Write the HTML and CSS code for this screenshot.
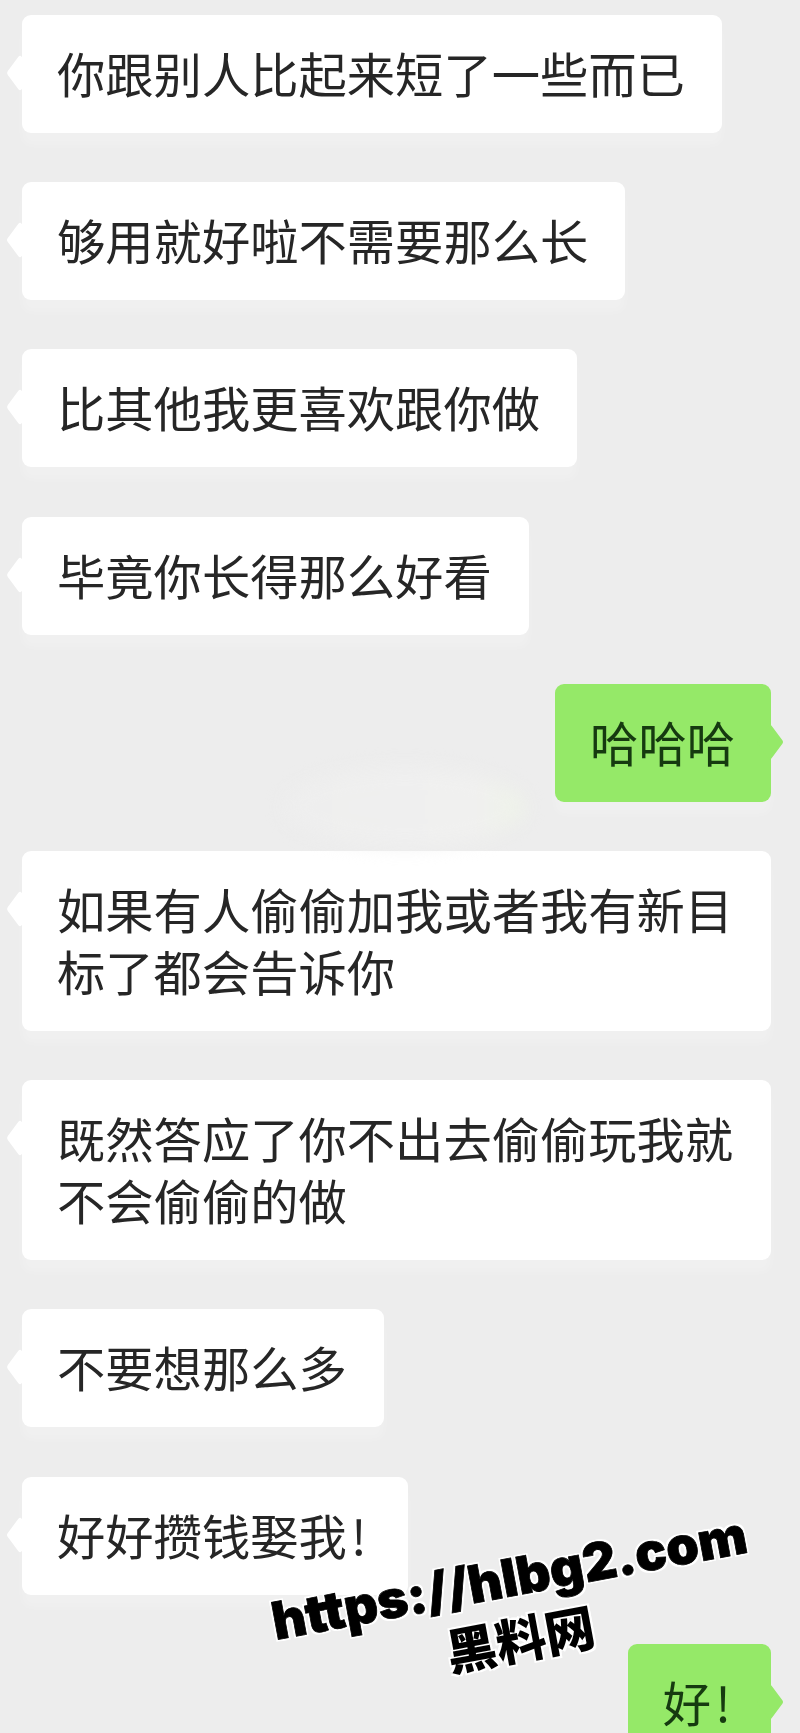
FILE: index.html
```html
<!DOCTYPE html>
<html lang="zh-CN">
<head>
    <meta charset="UTF-8">
    <meta name="viewport" content="width=device-width, initial-scale=1.0">
    <title>聊天记录</title>
    <link rel="stylesheet" href="styles.css">
</head>
<body>
    <div class="chat">
        <div class="msg">你跟别人比起来短了一些而已</div>
        <div class="msg">够用就好啦不需要那么长</div>
        <div class="msg">比其他我更喜欢跟你做</div>
        <div class="msg">毕竟你长得那么好看</div>
        <div class="msg me">哈哈哈</div>
        <div class="msg">如果有人偷偷加我或者我有新目标了都会告诉你</div>
        <div class="msg">既然答应了你不出去偷偷玩我就不会偷偷的做</div>
        <div class="msg">不要想那么多</div>
        <div class="msg">好好攒钱娶我<span class="bang">!</span></div>
        <div class="msg me">好<span class="bang">!</span></div>
    </div>

    <!-- smudge left over in the middle of the photo -->
    <div class="smudge"></div>

    <div class="watermark">
        <div class="wm-url">https://hlbg2.com</div>
        <div class="wm-name">黑料网</div>
    </div>
</body>
</html>
```

FILE: styles.css
```css
html, body {
    margin: 0;
    height: 1733px;
    overflow: hidden;
}
body {
    position: relative;
    background: #ededed;
    font-family: "Noto Sans CJK SC", "Noto Sans", sans-serif;
    color: #262626;
}
.chat {
    display: flex;
    flex-direction: column;
    align-items: flex-start;
    gap: 49.2px;
    padding: 15px 29px 0 22px;
    filter: blur(0.5px);
}
.msg {
    position: relative;
    box-sizing: border-box;
    max-width: 749px;
    padding: 26px 37px 30px 35px;
    background: #fff;
    border-radius: 9px;
    font-size: 48.3px;
    line-height: 62px;
    box-shadow: 0 12px 8px rgba(255, 255, 255, 0.2);
}
.msg::before {
    content: "";
    position: absolute;
    left: -15px;
    top: 45px;
    width: 26px;
    height: 26px;
    background: inherit;
    transform: scaleX(0.75) rotate(45deg);
    border-radius: 3px;
}
.me {
    align-self: flex-end;
    padding-left: 35px;
    padding-right: 36px;
    background: #95e968;
    color: #163a10;
}
.me::before {
    left: auto;
    right: -12px;
}
.bang {
    display: inline-block;
    width: 24px;
    text-align: center;
}
.smudge {
    position: absolute;
    left: 285px;
    top: 768px;
    width: 240px;
    height: 78px;
    border-radius: 50%;
    background: linear-gradient(90deg, #eeeeee, #f0f0ef 80%, #eef3e8);
    filter: blur(9px);
}
.watermark {
    position: absolute;
    left: 204px;
    top: 1545px;
    width: 620px;
    text-align: center;
    color: #000;
    font-weight: 900;
    transform: rotate(-10.5deg);
    text-shadow: 2px 2px 0 #fff, -2px -2px 0 #fff, 2px -2px 0 #fff, -2px 2px 0 #fff;
}
.wm-url {
    font-family: Inter, "Liberation Sans", sans-serif;
    font-size: 52px;
    line-height: 66px;
    -webkit-text-stroke: 0.8px #000;
}
.wm-name {
    font-family: "Noto Sans CJK SC", sans-serif;
    font-weight: 900;
    font-size: 50px;
    line-height: 52px;
}
```
